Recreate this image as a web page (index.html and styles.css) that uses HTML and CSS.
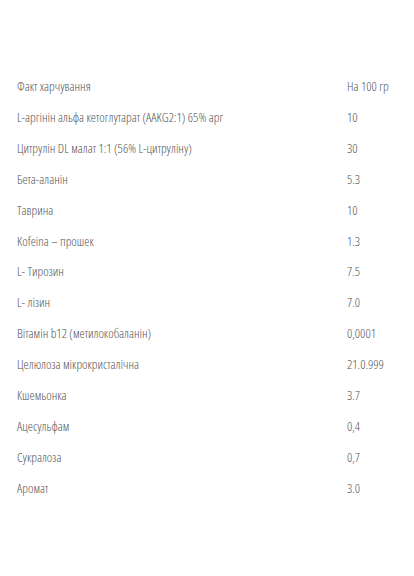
FILE: index.html
```html
<!DOCTYPE html>
<html lang="uk">
<head>
<meta charset="utf-8">
<link rel="stylesheet" href="styles.css">
</head>
<body>
<table class="facts">
<tbody>
<tr><td class="name">Факт харчування</td><td class="val">На 100 гр</td></tr>
<tr><td class="name">L-аргінін альфа кетоглутарат (AAKG2:1) 65% арг</td><td class="val">10</td></tr>
<tr><td class="name">Цитрулін DL малат 1:1 (56% L-цитруліну)</td><td class="val">30</td></tr>
<tr><td class="name">Бета-аланін</td><td class="val">5.3</td></tr>
<tr><td class="name">Таврина</td><td class="val">10</td></tr>
<tr><td class="name">Kofeina – прошек</td><td class="val">1.3</td></tr>
<tr><td class="name">L- Тирозин</td><td class="val">7.5</td></tr>
<tr><td class="name">L- лізин</td><td class="val">7.0</td></tr>
<tr><td class="name">Вітамін b12 (метилокобаланін)</td><td class="val">0,0001</td></tr>
<tr><td class="name">Целюлоза мікрокристалічна</td><td class="val">21.0.999</td></tr>
<tr><td class="name">Кшемьонка</td><td class="val">3.7</td></tr>
<tr><td class="name">Ацесульфам</td><td class="val">0,4</td></tr>
<tr><td class="name">Сукралоза</td><td class="val">0,7</td></tr>
<tr><td class="name">Аромат</td><td class="val">3.0</td></tr>
</tbody>
</table>
</body>
</html>
```
FILE: styles.css
```css
html, body {
  margin: 0;
  padding: 0;
  background: #ffffff;
}
body {
  font-family: "Open Sans", "Liberation Sans", sans-serif;
  font-stretch: 75%;
  font-weight: 300;
  font-size: 13px;
  color: #555555;
  padding: 71px 0 0 17px;
}
.facts {
  border-collapse: collapse;
  width: 390px;
}
.facts td {
  padding: 0;
  height: 30.9px;
  line-height: 30.9px;
  vertical-align: middle;
  white-space: nowrap;
}
.facts .name {
  width: 330px;
}
.facts .val {
  text-align: left;
}
```
